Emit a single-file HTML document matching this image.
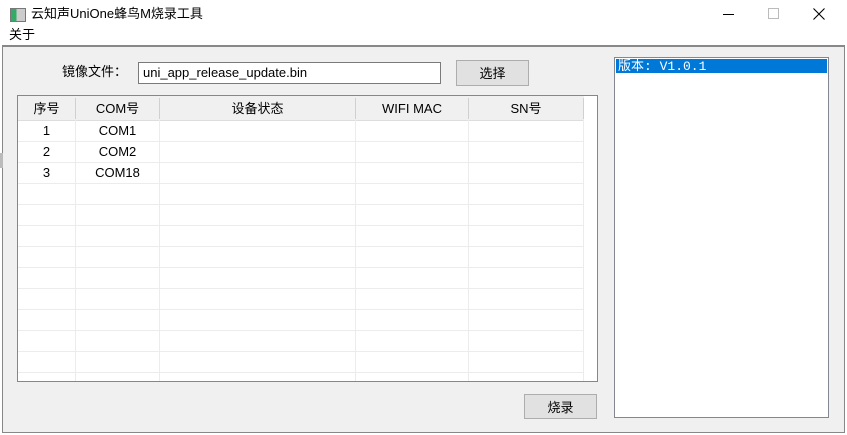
<!DOCTYPE html><html><head><meta charset="utf-8"><style>
body{margin:0;width:847px;height:435px;background:#fff;position:relative;overflow:hidden;font-family:"Liberation Sans","Noto Sans CJK SC",sans-serif;font-size:13px;line-height:16px;color:#000}
.a{position:absolute}
.th,.td{position:absolute;text-align:center;font-size:13px;line-height:16px}
</style></head><body>
<div class="a" style="left:10px;top:8px;width:14px;height:12px;border:1px solid #777;background:linear-gradient(90deg,#3a6 0 40%,#ccc 40%)"></div>
<div class="a" style="left:31px;top:6px;font-size:13px">云知声UniOne蜂鸟M烧录工具</div>
<div class="a" style="left:723px;top:14px;width:11px;height:1px;background:#000"></div>
<div class="a" style="left:768px;top:8px;width:9px;height:9px;border:1px solid #bbb"></div>
<svg class="a" style="left:813px;top:8px" width="12" height="12"><path d="M0.5 0.5L11.5 11.5M11.5 0.5L0.5 11.5" stroke="#000" stroke-width="1.1"/></svg>
<div class="a" style="left:9px;top:27px">关于</div>
<div class="a" style="left:2px;top:45px;width:841px;height:385px;background:#f0f0f0;border-top:2px solid #888;border-left:1px solid #888;border-right:1px solid #888;border-bottom:1px solid #888"></div>
<div class="a" style="left:0;top:153px;width:3px;height:15px;background:#bbb"></div>
<div class="a" style="left:62px;top:64px">镜像文件：</div>
<div class="a" style="left:138px;top:62px;width:301px;height:20px;border:1px solid #7a7a7a;background:#fff"></div>
<div class="a" style="left:143px;top:65px">uni_app_release_update.bin</div>
<div class="a" style="left:456px;top:60px;width:71px;height:24px;border:1px solid #adadad;background:#e1e1e1;text-align:center;line-height:26px">选择</div>
<div class="a" style="left:17px;top:95px;width:579px;height:285px;border:1px solid #828790;background:#fff;overflow:hidden">
<div class="a" style="left:0;top:0;width:565px;height:24px;background:#f0f0f0;border-bottom:1px solid #ddd"></div>
<div class="a" style="left:565px;top:0;width:14px;height:285px;background:#fff;border-left:1px solid #eee"></div>
<svg class="a" style="left:0;top:0" width="579" height="285">
<g stroke="#ececec"><line x1="0" x2="565" y1="45.5" y2="45.5"/><line x1="0" x2="565" y1="66.5" y2="66.5"/><line x1="0" x2="565" y1="87.5" y2="87.5"/><line x1="0" x2="565" y1="108.5" y2="108.5"/><line x1="0" x2="565" y1="129.5" y2="129.5"/><line x1="0" x2="565" y1="150.5" y2="150.5"/><line x1="0" x2="565" y1="171.5" y2="171.5"/><line x1="0" x2="565" y1="192.5" y2="192.5"/><line x1="0" x2="565" y1="213.5" y2="213.5"/><line x1="0" x2="565" y1="234.5" y2="234.5"/><line x1="0" x2="565" y1="255.5" y2="255.5"/><line x1="0" x2="565" y1="276.5" y2="276.5"/>
<line x1="57.5" x2="57.5" y1="24" y2="285"/><line x1="141.5" x2="141.5" y1="24" y2="285"/><line x1="337.5" x2="337.5" y1="24" y2="285"/><line x1="450.5" x2="450.5" y1="24" y2="285"/><line x1="565.5" x2="565.5" y1="24" y2="285"/></g>
<g stroke="#d0d0d0"><line x1="57.5" x2="57.5" y1="2" y2="23"/><line x1="141.5" x2="141.5" y1="2" y2="23"/><line x1="337.5" x2="337.5" y1="2" y2="23"/><line x1="450.5" x2="450.5" y1="2" y2="23"/><line x1="565.5" x2="565.5" y1="2" y2="23"/></g>
</svg>
<div class="th" style="left:0;width:57px;top:5px">序号</div>
<div class="th" style="left:58px;width:83px;top:5px">COM号</div>
<div class="th" style="left:142px;width:195px;top:5px">设备状态</div>
<div class="th" style="left:338px;width:112px;top:5px">WIFI MAC</div>
<div class="th" style="left:451px;width:114px;top:5px">SN号</div>
<div class="td" style="left:0;width:57px;top:27px">1</div><div class="td" style="left:58px;width:83px;top:27px">COM1</div>
<div class="td" style="left:0;width:57px;top:48px">2</div><div class="td" style="left:58px;width:83px;top:48px">COM2</div>
<div class="td" style="left:0;width:57px;top:69px">3</div><div class="td" style="left:58px;width:83px;top:69px">COM18</div>
</div>
<div class="a" style="left:524px;top:394px;width:71px;height:23px;border:1px solid #adadad;background:#e1e1e1;text-align:center;line-height:25px">烧录</div>
<div class="a" style="left:614px;top:57px;width:213px;height:359px;border:1px solid #828790;background:#fff"></div>
<div class="a" style="left:616px;top:59px;width:211px;height:14px;background:#0078d7;color:#fff;font-family:'Liberation Mono','Noto Sans CJK SC',monospace;font-size:13px;line-height:15px;padding-left:2px;box-sizing:border-box">版本: V1.0.1</div>
</body></html>
